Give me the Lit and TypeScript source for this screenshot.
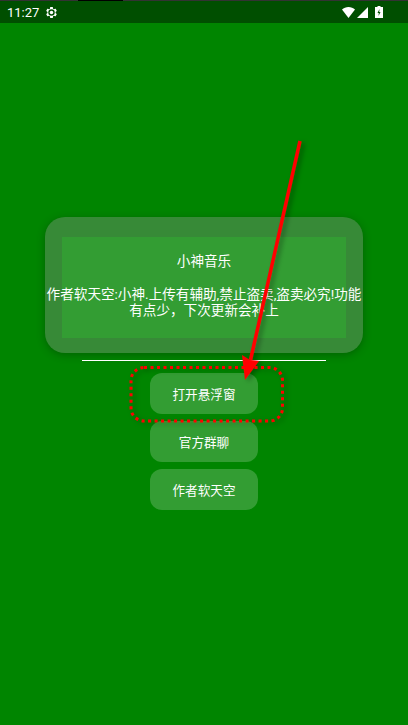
import { LitElement, html, css } from "lit";
import { customElement } from "lit/decorators.js";

@customElement("app-root")
export class AppRoot extends LitElement {
  static styles = css`
    :host {
      display: block;
      position: relative;
      width: 408px;
      height: 725px;
      overflow: hidden;
      background: #008500;
      color: #fff;
      font-family: Roboto, "Noto Sans CJK SC", sans-serif;
    }
    .status {
      height: 23px;
      box-sizing: border-box;
      background: #004f00;
      border-top: 1px solid #333;
      display: flex;
      align-items: center;
      padding: 0 25px 0 7px;
      font-size: 13px;
    }
    .status .gear { margin-left: 6px; }
    .spacer { flex: 1; }
    .sys { display: flex; align-items: center; gap: 2px; }
    .battery { margin-left: 5px; }
    .notch {
      position: absolute;
      left: 78px;
      top: 0;
      width: 45px;
      height: 1px;
      background: #000;
    }
    .main {
      display: flex;
      flex-direction: column;
      align-items: center;
      padding-top: 194px;
    }
    .card {
      width: 318px;
      height: 136px;
      box-sizing: border-box;
      padding: 20px 17px 15px;
      border-radius: 20px;
      background: #378a37;
      box-shadow: 0 2px 8px rgba(0, 0, 0, 0.25);
    }
    .inner {
      height: 101px;
      box-sizing: border-box;
      padding-top: 16px;
      background: #339d33;
      display: flex;
      flex-direction: column;
      align-items: center;
      text-align: center;
      font-size: 13.6px;
      line-height: 16.4px;
    }
    .inner p {
      margin: 0;
      white-space: nowrap;
    }
    .blank { height: 16.400px; }
    .rule {
      width: 244px;
      height: 1px;
      background: #fff;
      margin: 7px 0 12px;
    }
    .btn {
      width: 108px;
      height: 41px;
      border-radius: 12px;
      background: #339d33;
      display: flex;
      align-items: center;
      justify-content: center;
      font-size: 12.6px;
      margin-bottom: 7px;
    }
    .overlay {
      position: absolute;
      left: 0;
      top: 0;
      pointer-events: none;
    }
  `;

  render() {
    return html`
      <div class="status">
        <span>11:27</span>
        <svg class="gear" width="13" height="13" viewBox="0 0 24 24">
          <path fill="#fff" fill-rule="evenodd" d="M19.43 12.98c.04-.32.07-.64.07-.98s-.03-.66-.07-.98l2.11-1.65c.19-.15.24-.42.12-.64l-2-3.46c-.12-.22-.39-.3-.61-.22l-2.49 1c-.52-.4-1.08-.73-1.69-.98l-.38-2.65C14.46 2.18 14.25 2 14 2h-4c-.25 0-.46.18-.49.42l-.38 2.65c-.61.25-1.17.59-1.69.98l-2.49-1c-.23-.09-.49 0-.61.22l-2 3.46c-.13.22-.07.49.12.64l2.11 1.65c-.04.32-.07.65-.07.98s.03.66.07.98l-2.11 1.65c-.19.15-.24.42-.12.64l2 3.46c.12.22.39.3.61.22l2.49-1c.52.4 1.08.73 1.69.98l.38 2.65c.03.24.24.42.49.42h4c.25 0 .46-.18.49-.42l.38-2.65c.61-.25 1.17-.59 1.69-.98l2.49 1c.23.09.49 0 .61-.22l2-3.46c.12-.22.07-.49-.12-.64l-2.11-1.65zM12 18a6 6 0 1 1 0-12 6 6 0 0 1 0 12z"></path>
          <circle cx="12" cy="12" r="3.200" fill="#fff"></circle>
        </svg>
        <span class="spacer"></span>
        <div class="sys">
          <svg width="13" height="11" viewBox="0 0 13 11"><path fill="#fff" d="M0 2.500C1.700 1 4 0 6.500 0S11.300 1 13 2.500L6.500 11z"></path></svg>
          <svg width="11" height="11" viewBox="0 0 11 11"><path fill="#fff" d="M11 0v11H0z"></path></svg>
          <svg class="battery" width="8" height="12" viewBox="0 0 8 12"><path fill="#fff" d="M2.500 0h3v1H8v11H0V1h2.500z"></path><path fill="#004f00" d="M4.500 3 2.500 7h1.300l-.3 3 2-4H4.200z"></path></svg>
        </div>
      </div>
      <span class="notch"></span>
      <div class="main">
        <div class="card">
          <div class="inner">
            <p>小神音乐</p>
            <div class="blank"></div>
            <p>作者软天空:小神.上传有辅助,禁止盗卖,盗卖必究!功能</p>
            <p>有点少，下次更新会补上</p>
          </div>
        </div>
        <div class="rule"></div>
        <div class="btn">打开悬浮窗</div>
        <div class="btn">官方群聊</div>
        <div class="btn">作者软天空</div>
      </div>
      <svg class="overlay" width="408" height="725" viewBox="0 0 408 725">
        <defs>
          <filter id="s" x="-30%" y="-30%" width="160%" height="160%">
            <feDropShadow dx="3" dy="2" stdDeviation="2.500" flood-color="#000" flood-opacity="0.35"></feDropShadow>
          </filter>
        </defs>
        <g filter="url(#s)">
          <rect x="131" y="367.500" width="151.500" height="53.500" rx="13" fill="none" stroke="#f00" stroke-width="3" stroke-dasharray="3 3.500"></rect>
          <path d="M300 141 250.500 360" stroke="#f00" stroke-width="3.500" fill="none"></path>
          <path d="M245 380 242 355 250 360 259 361z" fill="#f00"></path>
        </g>
      </svg>
    `;
  }
}
